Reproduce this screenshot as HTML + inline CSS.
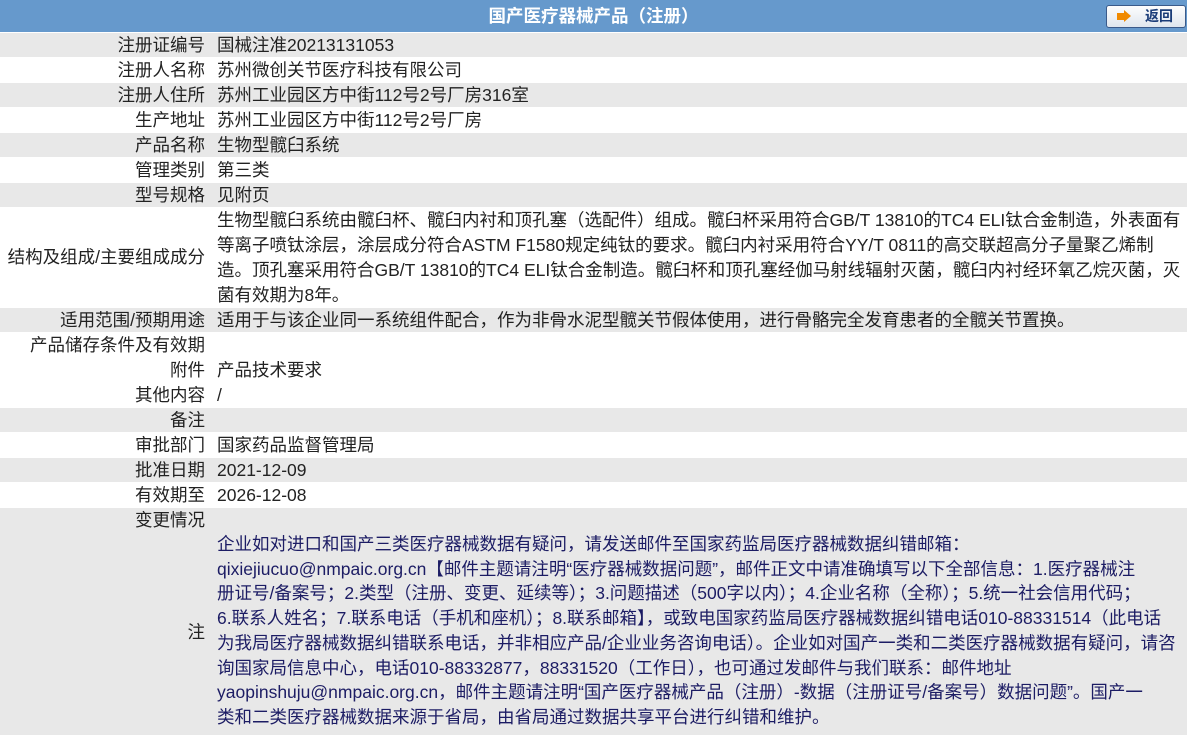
<!DOCTYPE html>
<html><head><meta charset="utf-8"><style>
body{margin:0;width:1194px;height:735px;overflow:hidden;background:#fff;font-family:"Liberation Sans","Noto Sans CJK SC",sans-serif;font-size:17.5px;color:#222;}
.hd{position:absolute;left:0;top:0;width:1187px;height:32px;background:#6699cc;color:#fff;font-weight:bold;font-size:17.5px;text-align:center;line-height:32px;}
.btn{position:absolute;left:1106px;top:5px;width:78px;height:21px;border:1px solid #3a5a8a;border-radius:3px;background:linear-gradient(#fdfdfd,#dfe6ee);font-size:14px;font-weight:bold;color:#1a3c78;line-height:21px;}
.btn .ar{position:absolute;left:10px;top:7px;width:7px;height:7px;background:#f08a00;}
.btn .ar:after{content:"";position:absolute;left:7px;top:-3px;border-left:7px solid #f08a00;border-top:6.5px solid transparent;border-bottom:6.5px solid transparent;}
.btn span{position:absolute;left:38px;top:0;}
.r{position:absolute;left:0;width:1187px;}
.g{background:#e8e8e8;}
.l{position:absolute;left:0;width:205px;text-align:right;white-space:nowrap;}
.v{position:absolute;left:217px;white-space:nowrap;}
.n{color:#1c1c64;}
</style></head><body>
<div class="hd">国产医疗器械产品（注册）</div>
<div class="btn"><div class="ar"></div><span>返回</span></div>

<div class="r g" style="top:33px;height:24px;line-height:24px"><div class="l">注册证编号</div><div class="v">国械注准20213131053</div></div>
<div class="r" style="top:58px;height:24px;line-height:24px"><div class="l">注册人名称</div><div class="v">苏州微创关节医疗科技有限公司</div></div>
<div class="r g" style="top:83px;height:24px;line-height:24px"><div class="l">注册人住所</div><div class="v">苏州工业园区方中街112号2号厂房316室</div></div>
<div class="r" style="top:108px;height:24px;line-height:24px"><div class="l">生产地址</div><div class="v">苏州工业园区方中街112号2号厂房</div></div>
<div class="r g" style="top:133px;height:24px;line-height:24px"><div class="l">产品名称</div><div class="v">生物型髋臼系统</div></div>
<div class="r" style="top:158px;height:24px;line-height:24px"><div class="l">管理类别</div><div class="v">第三类</div></div>
<div class="r g" style="top:183px;height:24px;line-height:24px"><div class="l">型号规格</div><div class="v">见附页</div></div>
<div class="r" style="top:208px;height:100px;line-height:25px"><div class="l" style="top:37px">结构及组成/主要组成成分</div><div class="v">生物型髋臼系统由髋臼杯、髋臼内衬和顶孔塞（选配件）组成。髋臼杯采用符合GB/T 13810的TC4 ELI钛合金制造，外表面有<br>等离子喷钛涂层，涂层成分符合ASTM F1580规定纯钛的要求。髋臼内衬采用符合YY/T 0811的高交联超高分子量聚乙烯制<br>造。顶孔塞采用符合GB/T 13810的TC4 ELI钛合金制造。髋臼杯和顶孔塞经伽马射线辐射灭菌，髋臼内衬经环氧乙烷灭菌，灭<br>菌有效期为8年。</div></div>
<div class="r g" style="top:308px;height:24px;line-height:24px"><div class="l">适用范围/预期用途</div><div class="v">适用于与该企业同一系统组件配合，作为非骨水泥型髋关节假体使用，进行骨骼完全发育患者的全髋关节置换。</div></div>
<div class="r" style="top:333px;height:24px;line-height:24px"><div class="l">产品储存条件及有效期</div></div>
<div class="r" style="top:358px;height:24px;line-height:24px"><div class="l">附件</div><div class="v">产品技术要求</div></div>
<div class="r" style="top:383px;height:24px;line-height:24px"><div class="l">其他内容</div><div class="v">/</div></div>
<div class="r g" style="top:408px;height:24px;line-height:24px"><div class="l">备注</div></div>
<div class="r" style="top:433px;height:24px;line-height:24px"><div class="l">审批部门</div><div class="v">国家药品监督管理局</div></div>
<div class="r g" style="top:458px;height:24px;line-height:24px"><div class="l">批准日期</div><div class="v">2021-12-09</div></div>
<div class="r" style="top:483px;height:24px;line-height:24px"><div class="l">有效期至</div><div class="v">2026-12-08</div></div>
<div class="r g" style="top:508px;height:24px;line-height:24px"><div class="l">变更情况</div></div>
<div class="r g" style="top:532px;height:203px;line-height:24.7px"><div class="l" style="top:88px">注</div><div class="v n">企业如对进口和国产三类医疗器械数据有疑问，请发送邮件至国家药监局医疗器械数据纠错邮箱：<br>qixiejiucuo@nmpaic.org.cn【邮件主题请注明“医疗器械数据问题”，邮件正文中请准确填写以下全部信息：1.医疗器械注<br>册证号/备案号；2.类型（注册、变更、延续等）；3.问题描述（500字以内）；4.企业名称（全称）；5.统一社会信用代码；<br>6.联系人姓名；7.联系电话（手机和座机）；8.联系邮箱】，或致电国家药监局医疗器械数据纠错电话010-88331514（此电话<br>为我局医疗器械数据纠错联系电话，并非相应产品/企业业务咨询电话）。企业如对国产一类和二类医疗器械数据有疑问，请咨<br>询国家局信息中心，电话010-88332877，88331520（工作日），也可通过发邮件与我们联系：邮件地址<br>yaopinshuju@nmpaic.org.cn，邮件主题请注明“国产医疗器械产品（注册）-数据（注册证号/备案号）数据问题”。国产一<br>类和二类医疗器械数据来源于省局，由省局通过数据共享平台进行纠错和维护。</div></div>
</body></html>
